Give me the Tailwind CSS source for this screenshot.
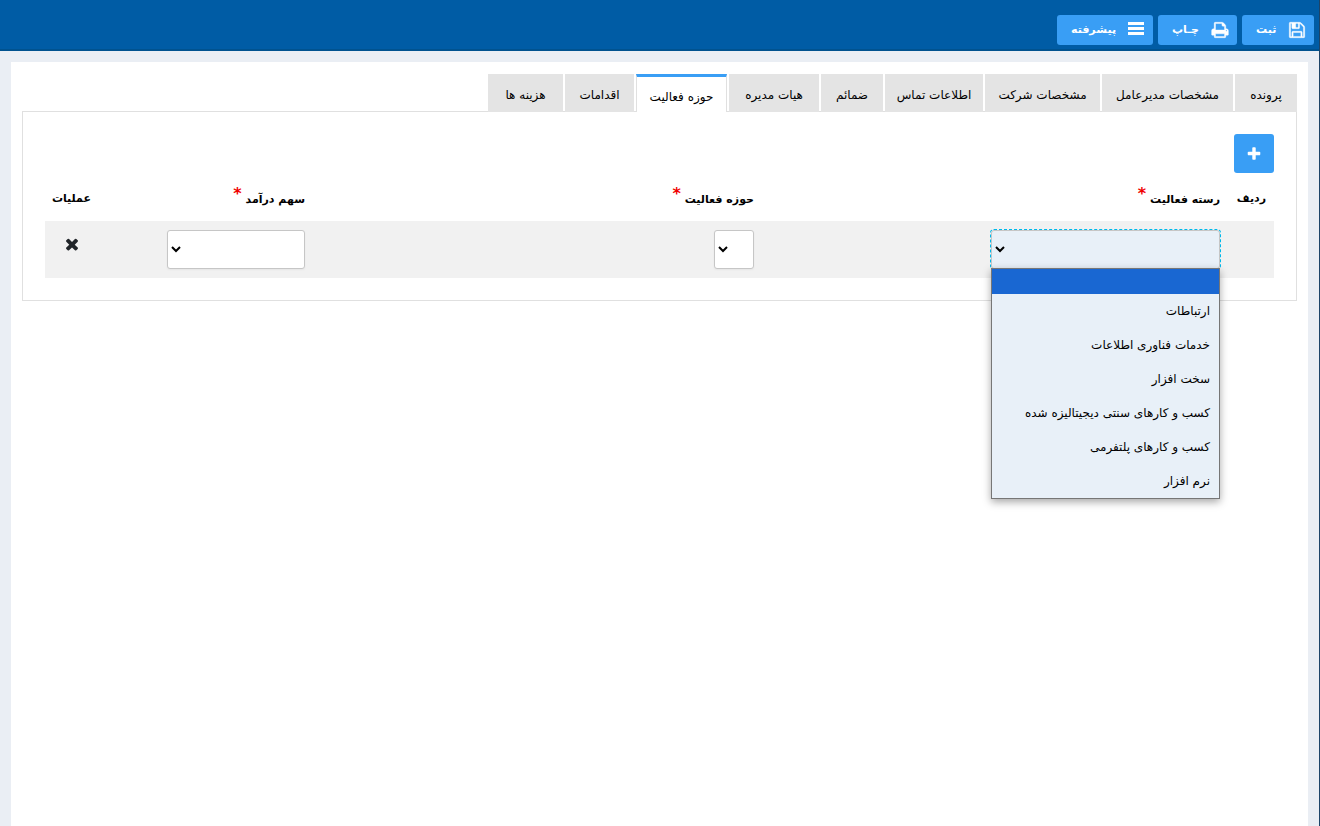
<!DOCTYPE html>
<html lang="fa" dir="rtl">
<head>
<meta charset="utf-8">
<title>حوزه فعالیت</title>
<script src="https://cdn.jsdelivr.net/npm/@tailwindcss/browser@4"></script>
</head>
<body class="flex min-h-screen flex-col border-r border-[#1d4468] bg-[#eaeef4] font-['DejaVu_Sans',sans-serif] text-xs text-black">
<header class="flex h-[51px] items-start gap-[5px] border-b-2 border-[#00528f] bg-[#005ca5] pt-[15px] pr-[5px] text-[11px] font-bold text-white">
  <button type="button" class="flex h-[30px] w-[72px] items-center justify-between rounded-[3px] bg-[#399ef5] pr-2 pl-[14px]">
    <svg class="size-[18px]" viewBox="0 0 1792 1792" fill="currentColor" stroke="currentColor" stroke-width="40" aria-hidden="true"><path d="M512 1536h768v-384h-768v384zm896 0h128v-896q0-14-10-38.5t-20-34.5l-281-281q-10-10-34-20t-39-10v416q0 40-28 68t-68 28h-576q-40 0-68-28t-28-68v-416h-128v1280h128v-416q0-40 28-68t68-28h832q40 0 68 28t28 68v416zm-384-928v-320q0-13-9.5-22.5t-22.5-9.5h-192q-13 0-22.5 9.5t-9.5 22.5v320q0 13 9.5 22.5t22.5 9.5h192q13 0 22.5-9.5t9.5-22.5zm640 32v928q0 40-28 68t-68 28h-1344q-40 0-68-28t-28-68v-1344q0-40 28-68t68-28h928q40 0 88 20t76 48l280 280q28 28 48 76t20 88z"/></svg>
    ثبت
  </button>
  <button type="button" class="flex h-[30px] w-[79px] items-center justify-between rounded-[3px] bg-[#399ef5] pr-2 pl-[14px]">
    <svg class="size-[18px]" viewBox="0 0 1792 1792" fill="currentColor" stroke="currentColor" stroke-width="40" aria-hidden="true"><path d="M448 1536h896v-256h-896v256zm0-640h896v-384h-160q-40 0-68-28t-28-68v-160h-640v640zm1152 64q0-26-19-45t-45-19-45 19-19 45 19 45 45 19 45-19 19-45zm128 0v416q0 13-9.5 22.5t-22.5 9.5h-224v160q0 40-28 68t-68 28h-960q-40 0-68-28t-28-68v-160h-224q-13 0-22.5-9.5t-9.5-22.5v-416q0-79 56.5-135.5t135.5-56.5h64v-544q0-40 28-68t68-28h672q40 0 88 20t76 48l152 152q28 28 48 76t20 88v256h64q79 0 135.5 56.5t56.5 135.5z"/></svg>
    چـاپ
  </button>
  <button type="button" class="flex h-[30px] w-24 items-center justify-between rounded-[3px] bg-[#399ef5] pr-2 pl-[14px]">
    <svg class="size-[18px]" viewBox="0 0 18 18" fill="currentColor" aria-hidden="true"><path d="M1 1h16v3H1zM1 6h16v3H1zM1 11h16v3H1z"/></svg>
    پیشرفته
  </button>
</header>
<main class="mx-[11px] mt-[11px] flex-1 bg-white px-[11px] pt-3">
  <div role="tablist" class="relative z-10 -mb-px flex h-[38px] gap-[2px]">
    <button type="button" role="tab" class="w-[62px] bg-[#e4e4e4] pt-1">پرونده</button>
    <button type="button" role="tab" class="w-[131px] bg-[#e4e4e4] pt-1">مشخصات مدیرعامل</button>
    <button type="button" role="tab" class="w-[115px] bg-[#e4e4e4] pt-1">مشخصات شرکت</button>
    <button type="button" role="tab" class="w-[98px] bg-[#e4e4e4] pt-1">اطلاعات تماس</button>
    <button type="button" role="tab" class="w-[62px] bg-[#e4e4e4] pt-1">ضمائم</button>
    <button type="button" role="tab" class="w-[90px] bg-[#e4e4e4] pt-1">هیات مدیره</button>
    <button type="button" role="tab" aria-selected="true" class="w-[91px] border-x border-t-3 border-x-[#e0e0e0] border-t-[#399ef5] bg-white pt-1">حوزه فعالیت</button>
    <button type="button" role="tab" class="w-[69px] bg-[#e4e4e4] pt-1">اقدامات</button>
    <button type="button" role="tab" class="w-[75px] bg-[#e4e4e4] pt-1">هزینه ها</button>
  </div>
  <section class="border border-[#e0e0e0] p-[22px]">
    <button type="button" aria-label="افزودن" class="flex h-[39px] w-10 items-center justify-center rounded-[3px] bg-[#399ef5] text-white">
      <svg class="size-4" viewBox="0 0 1792 1792" fill="currentColor" aria-hidden="true"><path d="M1600 736v192q0 40-28 68t-68 28h-416v416q0 40-28 68t-68 28h-192q-40 0-68-28t-28-68v-416h-416q-40 0-68-28t-28-68v-192q0-40 28-68t68-28h416v-416q0-40 28-68t68-28h192q40 0 68 28t28 68v416h416q40 0 68 28t28 68z"/></svg>
    </button>
    <table class="mt-1 w-full table-fixed">
      <colgroup>
        <col class="w-[46px]"><col><col class="w-[449px]"><col class="w-[214px]"><col class="w-[54px]">
      </colgroup>
      <thead>
        <tr class="h-11 text-right text-[11px] whitespace-nowrap">
          <th scope="col" class="pr-2">ردیف</th>
          <th scope="col" class="pr-2"><label for="category">رسته فعالیت</label> <sup class="-top-1 text-base leading-none text-[#f00000]">*</sup></th>
          <th scope="col" class="pr-2"><label for="field">حوزه فعالیت</label> <sup class="-top-1 text-base leading-none text-[#f00000]">*</sup></th>
          <th scope="col" class="pr-2"><label for="share">سهم درآمد</label> <sup class="-top-1 text-base leading-none text-[#f00000]">*</sup></th>
          <th scope="col" class="pr-2">عملیات</th>
        </tr>
      </thead>
      <tbody>
        <tr class="h-[57px] bg-[#f1f1f1]">
          <td></td>
          <td class="pr-2">
            <div class="relative w-1/2">
              <select id="category" class="block h-[39px] w-full appearance-none rounded-[3px] border border-[#c6c6c6] bg-[#e8f0f8] outline-1 outline-dashed outline-[#00b8ea]"><option></option></select>
              <svg class="pointer-events-none absolute top-[14px] left-1 size-[10px]" viewBox="0 0 10 10" fill="none" stroke="black" stroke-width="2" aria-hidden="true"><path d="M1 3l4 4 4-4"/></svg>
              <ul role="listbox" aria-label="رسته فعالیت" class="absolute top-[38px] right-0 z-20 w-full border border-[#767676] bg-[#e8f0f8] shadow-[0_3px_8px_rgba(0,0,0,0.35)]">
                <li role="option" aria-selected="true" class="h-[25px] bg-[#1967d2]"></li>
                <li role="option" class="flex h-[34px] items-center pr-[9px]">ارتباطات</li>
                <li role="option" class="flex h-[34px] items-center pr-[9px]">خدمات فناوری اطلاعات</li>
                <li role="option" class="flex h-[34px] items-center pr-[9px]">سخت افزار</li>
                <li role="option" class="flex h-[34px] items-center pr-[9px]">کسب و کارهای سنتی دیجیتالیزه شده</li>
                <li role="option" class="flex h-[34px] items-center pr-[9px]">کسب و کارهای پلتفرمی</li>
                <li role="option" class="flex h-[34px] items-center pr-[9px]">نرم افزار</li>
              </ul>
            </div>
          </td>
          <td class="pr-2">
            <div class="relative w-10">
              <select id="field" class="block h-[39px] w-full appearance-none rounded-[3px] border border-[#c6c6c6] bg-white shadow-xs"><option></option></select>
              <svg class="pointer-events-none absolute top-[14px] left-1 size-[10px]" viewBox="0 0 10 10" fill="none" stroke="black" stroke-width="2" aria-hidden="true"><path d="M1 3l4 4 4-4"/></svg>
            </div>
          </td>
          <td class="pr-2">
            <div class="relative w-[138px]">
              <select id="share" class="block h-[39px] w-full appearance-none rounded-[3px] border border-[#c6c6c6] bg-white shadow-xs"><option></option></select>
              <svg class="pointer-events-none absolute top-[14px] left-1 size-[10px]" viewBox="0 0 10 10" fill="none" stroke="black" stroke-width="2" aria-hidden="true"><path d="M1 3l4 4 4-4"/></svg>
            </div>
          </td>
          <td class="pb-3">
            <button type="button" aria-label="حذف" class="mx-auto block text-[#212529]"><svg class="size-[18px]" viewBox="0 0 1792 1792" fill="currentColor" aria-hidden="true"><path d="M1490 1322q0 40-28 68l-136 136q-28 28-68 28t-68-28l-294-294-294 294q-28 28-68 28t-68-28l-136-136q-28-28-28-68t28-68l294-294-294-294q-28-28-28-68t28-68l136-136q28-28 68-28t68 28l294 294 294-294q28-28 68-28t68 28l136 136q28 28 28 68t-28 68l-294 294 294 294q28 28 28 68z"/></svg></button>
          </td>
        </tr>
      </tbody>
    </table>
  </section>
</main>
</body>
</html>
